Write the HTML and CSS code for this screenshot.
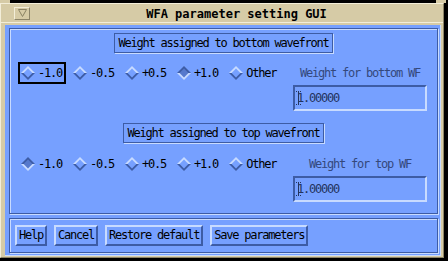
FILE: index.html
```html
<!DOCTYPE html>
<html lang="en">
<head>
  <meta charset="UTF-8">
  <title>WFA parameter setting GUI</title>
  <link rel="stylesheet" href="styles.css">
</head>
<body>

  <svg class="defs" width="0" height="0">
    <symbol id="d-up" viewBox="0 0 14 14">
      <polygon points="7,0 14,7 0,7" fill="#c8dbff"/>
      <polygon points="0,7 14,7 7,14" fill="#3d5ca5"/>
      <polygon points="7,2.6 11.4,7 7,11.4 2.6,7" fill="#76a0ff"/>
    </symbol>
    <symbol id="d-down" viewBox="0 0 14 14">
      <polygon points="7,0 14,7 0,7" fill="#3d5ca5"/>
      <polygon points="0,7 14,7 7,14" fill="#c8dbff"/>
      <polygon points="7,2.6 11.4,7 7,11.4 2.6,7" fill="#5679cc"/>
    </symbol>
  </svg>

  <div class="window">
    <div class="titlebar">
      <div class="menu-btn">
        <svg width="9" height="8" viewBox="0 0 9 8"><polygon points="0.5,0.5 8.5,0.5 4.5,7.5" fill="none" stroke="#8a8264" stroke-width="1"/></svg>
      </div>
      <div class="title">WFA parameter setting GUI</div>
    </div>

    <div class="client">
      <div class="panel main-panel">

        <div class="group">
          <div class="group-title">Weight assigned to bottom wavefront</div>
          <div class="group-body">
            <div class="radios">
              <span class="toggle focus"><svg class="diamond"><use href="#d-up"/></svg>-1.0</span>
              <span class="toggle"><svg class="diamond"><use href="#d-up"/></svg>-0.5</span>
              <span class="toggle"><svg class="diamond"><use href="#d-up"/></svg>+0.5</span>
              <span class="toggle"><svg class="diamond"><use href="#d-down"/></svg>+1.0</span>
              <span class="toggle"><svg class="diamond"><use href="#d-up"/></svg>Other</span>
            </div>
            <div class="side">
              <div class="side-label">Weight for bottom WF</div>
              <div class="field"><span class="caret"></span>1.00000</div>
            </div>
          </div>
        </div>

        <div class="group second">
          <div class="group-title">Weight assigned to top wavefront</div>
          <div class="group-body">
            <div class="radios">
              <span class="toggle"><svg class="diamond"><use href="#d-down"/></svg>-1.0</span>
              <span class="toggle"><svg class="diamond"><use href="#d-up"/></svg>-0.5</span>
              <span class="toggle"><svg class="diamond"><use href="#d-up"/></svg>+0.5</span>
              <span class="toggle"><svg class="diamond"><use href="#d-up"/></svg>+1.0</span>
              <span class="toggle"><svg class="diamond"><use href="#d-up"/></svg>Other</span>
            </div>
            <div class="side">
              <div class="side-label">Weight for top WF</div>
              <div class="field"><span class="caret"></span>1.00000</div>
            </div>
          </div>
        </div>

      </div>

      <div class="panel button-panel">
        <button>Help</button>
        <button>Cancel</button>
        <button>Restore default</button>
        <button>Save parameters</button>
      </div>
    </div>
  </div>

</body>
</html>
```

FILE: styles.css
```css
body {
  margin: 0;
  padding-top: 3px;
  background-color: #000000;
  font-family: "DejaVu Sans Mono", monospace;
  font-size: 12px;
  letter-spacing: -1.22px;
  color: #000000;
}
.defs {
  position: absolute;
}
.window {
  position: relative;
  width: 444px;
  height: 255px;
  box-sizing: border-box;
  background-color: #d6cba6;
  border-top: 1px solid #f3eed9;
  border-left: 1px solid #f3eed9;
  border-right: 1px solid #8c8468;
  border-bottom: 1px solid #8c8468;
  display: flex;
  flex-direction: column;
}
.window::before {
  content: "";
  position: absolute;
  left: -1px;
  top: -4px;
  width: 10px;
  height: 3px;
  background-color: #d6cba6;
  box-shadow: 436px 0 0 #d6cba6, 0 259px 0 #d6cba6, 436px 259px 0 #d6cba6;
}
.titlebar {
  height: 18px;
  border-bottom: 1px solid #f3eed9;
  display: flex;
  align-items: center;
}
.menu-btn {
  width: 16px;
  height: 13px;
  box-sizing: border-box;
  margin-left: 13px;
  border-top: 1px solid #f3eed9;
  border-left: 1px solid #f3eed9;
  border-right: 1px solid #8c8468;
  border-bottom: 1px solid #8c8468;
  display: flex;
  align-items: center;
  justify-content: center;
}
.title {
  flex: 1;
  text-align: center;
  font-weight: bold;
  letter-spacing: 0;
  padding-top: 1px;
}
.client {
  flex: 1;
  margin: 2px 2px 1px 4px;
  padding: 3px 2px 2px 4px;
  background-color: #76a0ff;
  border-right: 1px solid #c8dbff;
  border-bottom: 1px solid #c8dbff;
  display: flex;
  flex-direction: column;
  gap: 4px;
}
.panel {
  box-sizing: border-box;
  border: 1px solid #3d5ca5;
  box-shadow: inset 1px 1px 0 #c8dbff, 1px 1px 0 #c8dbff;
}
.main-panel {
  height: 186px;
  display: flex;
  flex-direction: column;
}
.group {
  display: flex;
  flex-direction: column;
  margin-top: 4px;
}
.group.second {
  margin-top: 12px;
}
.group-title {
  align-self: center;
  height: 20px;
  box-sizing: border-box;
  line-height: 18px;
  padding: 0 3px;
  border: 1px solid #3d5ca5;
  box-shadow: 1px 1px 0 #c8dbff;
  white-space: pre;
}
.group-body {
  display: flex;
  justify-content: space-between;
  align-items: flex-start;
  margin-top: 9px;
}
.group.second .group-body {
  margin-top: 10px;
}
.radios {
  display: flex;
  gap: 4px;
  padding-left: 8px;
}
.toggle {
  display: flex;
  align-items: center;
  gap: 3px;
  height: 22px;
  box-sizing: border-box;
  padding: 0 2px 0 1px;
  border: 2px solid transparent;
}
.toggle.focus {
  border-color: #000000;
}
.diamond {
  width: 14px;
  height: 14px;
}
.side {
  width: 134px;
  margin-right: 10px;
  display: flex;
  flex-direction: column;
}
.side-label {
  height: 22px;
  line-height: 22px;
  text-align: center;
  color: #34487c;
}
.field {
  position: relative;
  margin-top: 1px;
  height: 26px;
  box-sizing: border-box;
  padding-left: 2px;
  line-height: 22px;
  color: #24345e;
  border-top: 2px solid #3d5ca5;
  border-left: 2px solid #3d5ca5;
  border-right: 2px solid #c8dbff;
  border-bottom: 2px solid #c8dbff;
}
.caret {
  position: absolute;
  left: 1px;
  top: 4px;
  width: 5px;
  height: 14px;
  box-sizing: border-box;
  border-top: 1px dotted #24345e;
  border-bottom: 1px dotted #24345e;
  background: linear-gradient(#24345e, #24345e) center / 1px 100% no-repeat;
}
.button-panel {
  height: 35px;
  padding-left: 5px;
  display: flex;
  align-items: center;
  gap: 7px;
}
button {
  height: 21px;
  box-sizing: border-box;
  padding: 0 2px;
  font-family: "DejaVu Sans Mono", monospace;
  font-size: 12px;
  letter-spacing: -1.22px;
  line-height: 17px;
  color: #000000;
  background-color: #76a0ff;
  border-top: 2px solid #c8dbff;
  border-left: 2px solid #c8dbff;
  border-right: 2px solid #3d5ca5;
  border-bottom: 2px solid #3d5ca5;
  border-radius: 0;
}
```
